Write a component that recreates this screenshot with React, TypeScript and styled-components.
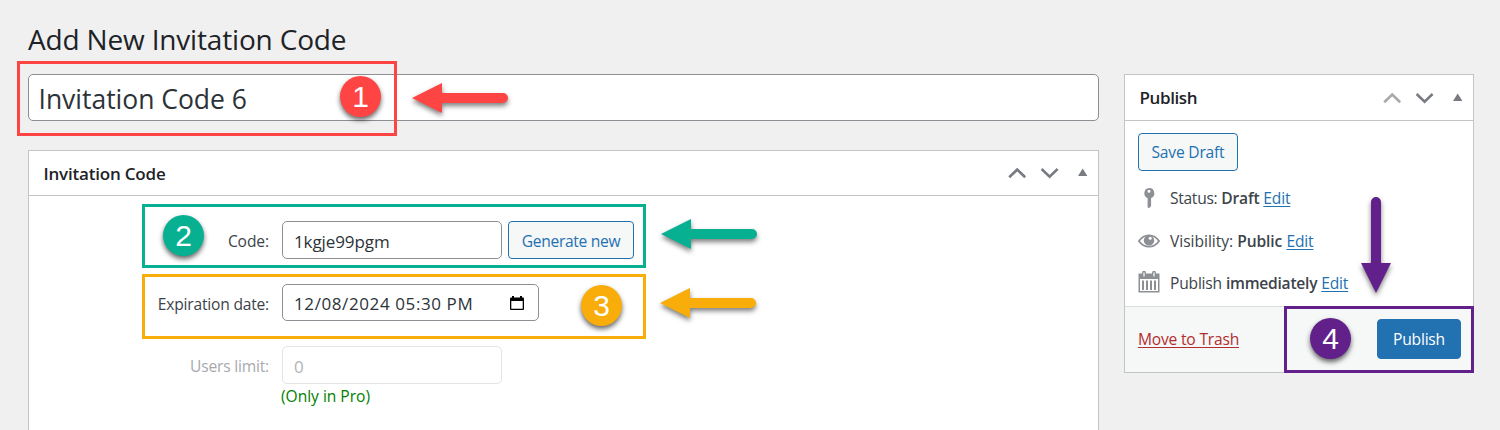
import React from "react";
import styled, { createGlobalStyle } from "styled-components";

const GlobalStyle = createGlobalStyle`
  *, *::before, *::after { box-sizing: border-box; }
  body {
    margin: 0;
    background: #f0f0f0;
    color: #3c434a;
    font-family: "Open Sans", "Noto Sans", sans-serif;
    overflow: hidden;
  }
`;

const colors = {
  red: "#ff4444",
  green: "#08b092",
  amber: "#f9ad0b",
  purple: "#62208a",
  link: "#2271b1",
};

const Page = styled.div`
  position: relative;
  width: 1500px;
  height: 430px;
  overflow: hidden;
  padding: 19px 26px 0 28px;
`;

const Heading = styled.h1`
  margin: 0;
  height: 55px;
  font-size: 28px;
  font-weight: 400;
  line-height: 40px;
  letter-spacing: -0.17px;
  color: #1d2327;
  white-space: nowrap;
`;

const Columns = styled.div`
  display: grid;
  grid-template-columns: 1071px 350px;
  column-gap: 25px;
  align-items: start;
`;

const MainColumn = styled.div`
  display: flex;
  flex-direction: column;
  gap: 29px;
`;

const TitleField = styled.div`
  height: 47px;
  padding: 0 9.5px;
  border: 1px solid #8c8f94;
  border-radius: 5px;
  background: #fff;
  font-size: 26.5px;
  line-height: 48px;
  letter-spacing: -0.02px;
  color: #2c3338;
  white-space: nowrap;
`;

const Panel = styled.section<{ $height: number }>`
  height: ${(p) => p.$height}px;
  border: 1px solid #c3c4c7;
  background: #fff;
  display: flex;
  flex-direction: column;
`;

const PanelHeader = styled.header<{ $height: number }>`
  display: flex;
  align-items: center;
  justify-content: space-between;
  flex: none;
  height: ${(p) => p.$height}px;
  padding: 0 8px 0 14.5px;
  border-bottom: 1px solid #c3c4c7;
`;

const PanelTitle = styled.h2<{ $spacing: number; $drop?: number }>`
  margin: 0;
  padding-top: ${(p) => p.$drop ?? 0}px;
  font-size: 17px;
  font-weight: 600;
  line-height: 24px;
  letter-spacing: ${(p) => p.$spacing}px;
  color: #1d2327;
`;

const HandleIcons = styled.svg`
  display: block;
  flex: none;
`;

const Form = styled.div`
  display: flex;
  flex-direction: column;
  padding-top: 25px;
`;

const FieldRow = styled.div<{ $height: number; $muted?: boolean }>`
  display: flex;
  align-items: center;
  height: ${(p) => p.$height}px;
  margin-bottom: 25px;
  color: ${(p) => (p.$muted ? "#a7aaad" : "#3c434a")};
`;

const Label = styled.label<{ $spacing: number }>`
  width: 240px;
  margin-right: 13px;
  padding-top: 2px;
  text-align: right;
  font-size: 15.6px;
  line-height: 22px;
  letter-spacing: ${(p) => p.$spacing}px;
  white-space: nowrap;
`;

const Field = styled.div<{ $width: number; $spacing?: number; $muted?: boolean }>`
  display: flex;
  align-items: center;
  justify-content: space-between;
  width: ${(p) => p.$width}px;
  height: 100%;
  padding: 2px 14px 0 11px;
  border: 1px solid ${(p) => (p.$muted ? "#e3e4e6" : "#8c8f94")};
  border-radius: 5px;
  background: #fff;
  font-size: 17px;
  letter-spacing: ${(p) => p.$spacing ?? 0}px;
  color: ${(p) => (p.$muted ? "#b2b4b7" : "#2c3338")};
  white-space: nowrap;
`;

const Button = styled.button<{ $width: number; $spacing: number; $primary?: boolean; $drop?: number }>`
  display: block;
  width: ${(p) => p.$width}px;
  height: ${(p) => (p.$primary ? 40 : 38)}px;
  padding: ${(p) => p.$drop ?? 0}px 0 0;
  border: 1px solid ${colors.link};
  border-radius: 4px;
  background: ${(p) => (p.$primary ? colors.link : "#f6f7f7")};
  color: ${(p) => (p.$primary ? "#fff" : colors.link)};
  font-family: inherit;
  font-size: 15.6px;
  letter-spacing: ${(p) => p.$spacing}px;
  white-space: nowrap;
`;

const GenerateSlot = styled.div`
  margin-left: 6px;
`;

const ProNote = styled.div`
  margin: -25px 0 0 252px;
  padding-top: 1px;
  font-size: 15.6px;
  line-height: 22px;
  letter-spacing: -0.03px;
  color: #008000;
`;

const PublishBody = styled.div`
  flex: 1;
  padding: 12px 13px 0;
`;

const StatusList = styled.div`
  display: flex;
  flex-direction: column;
  padding-top: 6px;
`;

const StatusRow = styled.div`
  display: flex;
  align-items: center;
  height: 42.4px;
  font-size: 15.6px;
  white-space: nowrap;
`;

const StatusIcon = styled.svg`
  flex: none;
  width: 24px;
  height: 24px;
  margin-right: 8px;
`;

const StatusText = styled.span<{ $spacing: number; $gap: number }>`
  letter-spacing: ${(p) => p.$spacing}px;
  margin-right: ${(p) => p.$gap}px;
`;

const StatusValue = styled.b<{ $spacing: number; $gap: number }>`
  font-weight: 600;
  letter-spacing: ${(p) => p.$spacing}px;
  margin-right: ${(p) => p.$gap}px;
`;

const Link = styled.a<{ $danger?: boolean; $spacing: number }>`
  color: ${(p) => (p.$danger ? "#b32d2e" : colors.link)};
  font-size: 15.6px;
  letter-spacing: ${(p) => p.$spacing}px;
  text-decoration: underline;
  text-decoration-thickness: 1px;
  text-underline-offset: 2px;
  text-decoration-skip-ink: none;
`;

const PublishFooter = styled.footer`
  display: flex;
  align-items: center;
  justify-content: space-between;
  flex: none;
  height: 66px;
  padding: 0 12px 1px 13px;
  border-top: 1px solid #dcdcde;
  background: #f6f7f7;
`;

const Highlight = styled.div<{ $x: number; $y: number; $w: number; $h: number; $color: string }>`
  position: absolute;
  left: ${(p) => p.$x}px;
  top: ${(p) => p.$y}px;
  width: ${(p) => p.$w}px;
  height: ${(p) => p.$h}px;
  border: 3px solid ${(p) => p.$color};
`;

const Step = styled.div<{ $x: number; $y: number; $color: string }>`
  position: absolute;
  left: ${(p) => p.$x}px;
  top: ${(p) => p.$y}px;
  width: 41px;
  height: 41px;
  border-radius: 50%;
  background: ${(p) => p.$color};
  box-shadow: 0 3px 5px rgba(0, 0, 0, 0.6);
  color: #fff;
  font-family: "Liberation Sans", Arial, sans-serif;
  font-size: 30px;
  line-height: 42px;
  text-align: center;
`;

const ArrowSvg = styled.svg<{ $x: number; $y: number }>`
  position: absolute;
  left: ${(p) => p.$x}px;
  top: ${(p) => p.$y}px;
  overflow: visible;
  filter: drop-shadow(0 3px 2.5px rgba(0, 0, 0, 0.5));
`;

function LeftArrow({ x, y, color }: { x: number; y: number; color: string }) {
  return (
    <ArrowSvg $x={x} $y={y} width="96" height="30" fill={color}>
      <path d="M0 15 30 0V10H91a5 5 0 0 1 0 10H30V30Z" />
    </ArrowSvg>
  );
}

function DownArrow({ x, y, color }: { x: number; y: number; color: string }) {
  return (
    <ArrowSvg $x={x} $y={y} width="30" height="96" fill={color}>
      <path d="M15 96 0 66H10V5a5 5 0 0 1 10 0V66H30Z" />
    </ArrowSvg>
  );
}

function PanelHandles({ first }: { first?: boolean }) {
  return (
    <HandleIcons width="84" height="24" viewBox="0 0 84 24" fill="none">
      <path d="M3.200 16.200 11.200 8.600 19.200 16.200" stroke={first ? "#a7aaad" : "#787c82"} strokeWidth="2.600" />
      <path d="M35.600 8 43.600 15.600 51.600 8" stroke="#787c82" strokeWidth="2.600" />
      <path d="M72 15 76.700 7.500 81.400 15Z" fill="#787c82" />
    </HandleIcons>
  );
}

function CalendarGlyph() {
  return (
    <svg width="14" height="15" viewBox="0 0 14 15">
      <path
        fill="#000"
        fillRule="evenodd"
        d="M2 0h2v1.500h6V0h2v1.500h1a1 1 0 0 1 1 1V13a1 1 0 0 1-1 1H1a1 1 0 0 1-1-1V2.500a1 1 0 0 1 1-1h1ZM1.300 5v7.700h11.400V5Z"
      />
    </svg>
  );
}

export default function App() {
  return (
    <Page>
      <GlobalStyle />
      <Heading>Add New Invitation Code</Heading>
      <Columns>
        <MainColumn>
          <TitleField>Invitation Code 6</TitleField>
          <Panel $height={320}>
            <PanelHeader $height={45}>
              <PanelTitle $spacing={-0.2} $drop={2}>Invitation Code</PanelTitle>
              <PanelHandles />
            </PanelHeader>
            <Form>
              <FieldRow $height={38}>
                <Label $spacing={-0.1}>Code:</Label>
                <Field $width={220} $spacing={-0.1}>1kgje99pgm</Field>
                <GenerateSlot>
                  <Button $width={126} $spacing={-0.3} $drop={2}>Generate new</Button>
                </GenerateSlot>
              </FieldRow>
              <FieldRow $height={37}>
                <Label $spacing={-0.2}>Expiration date:</Label>
                <Field $width={257} $spacing={0.6}>
                  <span>12/08/2024 05:30 PM</span>
                  <CalendarGlyph />
                </Field>
              </FieldRow>
              <FieldRow $height={38} $muted>
                <Label $spacing={-0.2}>Users limit:</Label>
                <Field $width={220} $muted>0</Field>
              </FieldRow>
              <ProNote>(Only in Pro)</ProNote>
            </Form>
          </Panel>
        </MainColumn>
        <Panel $height={299} as="aside">
          <PanelHeader $height={46}>
            <PanelTitle $spacing={-0.4}>Publish</PanelTitle>
            <PanelHandles first />
          </PanelHeader>
          <PublishBody>
            <Button $width={100} $spacing={-0.2}>Save Draft</Button>
            <StatusList>
              <StatusRow>
                <StatusIcon viewBox="0 0 24 24" fill="#8c8f94">
                  <path fillRule="evenodd" d="M11 2a5.200 5.200 0 0 1 2.100 10V20l-2 2.300-1.500-1V12A5.200 5.200 0 0 1 11 2Zm0 1.700a1.500 1.500 0 1 0 0 3 1.500 1.500 0 0 0 0-3Z" />
                </StatusIcon>
                <StatusText $spacing={-0.3} $gap={4}>Status:</StatusText>
                <StatusValue $spacing={-0.2} $gap={4}>Draft</StatusValue>
                <Link $spacing={-0.2}>Edit</Link>
              </StatusRow>
              <StatusRow>
                <StatusIcon viewBox="0 0 24 24">
                  <path d="M.9 12C6 4.400 16 4.400 21.100 12 16 19.600 6 19.600 .9 12Z" fill="none" stroke="#8c8f94" strokeWidth="1.700" />
                  <circle cx="11" cy="11.400" r="5.200" fill="#8c8f94" />
                  <circle cx="12.200" cy="9.300" r="1.500" fill="#fff" />
                </StatusIcon>
                <StatusText $spacing={-0.02} $gap={4}>Visibility:</StatusText>
                <StatusValue $spacing={-0.1} $gap={4.2}>Public</StatusValue>
                <Link $spacing={-0.2}>Edit</Link>
              </StatusRow>
              <StatusRow>
                <StatusIcon viewBox="0 0 24 24" fill="#8c8f94">
                  <path
                    fillRule="evenodd"
                    d="M.5 2.500H4V1.800a2 2 0 0 1 4 0V2.500h6V1.800a2 2 0 0 1 4 0V2.500h3.500V21.500H.5ZM5.400 1.800V5a.6.6 0 0 0 1.200 0V1.800a.6.6 0 0 0-1.200 0ZM15.400 1.800V5a.6.6 0 0 0 1.200 0V1.800a.6.6 0 0 0-1.200 0ZM2 8V20h18V8Z"
                  />
                  <path d="M4 9.500h2V19H4ZM8 9.500h2V19H8ZM12 9.500h2V19h-2ZM16 9.500h2V19h-2Z" />
                </StatusIcon>
                <StatusText $spacing={-0.2} $gap={4}>Publish</StatusText>
                <StatusValue $spacing={-0.25} $gap={4}>immediately</StatusValue>
                <Link $spacing={-0.2}>Edit</Link>
              </StatusRow>
            </StatusList>
          </PublishBody>
          <PublishFooter>
            <Link $danger $spacing={-0.2}>Move to Trash</Link>
            <Button $primary $width={84} $spacing={-0.2}>Publish</Button>
          </PublishFooter>
        </Panel>
      </Columns>

      <Highlight $x={17} $y={61} $w={380} $h={75} $color={colors.red} />
      <Highlight $x={142} $y={204} $w={504} $h={64} $color={colors.green} />
      <Highlight $x={142} $y={274} $w={504} $h={65} $color={colors.amber} />
      <Highlight $x={1284} $y={306} $w={190} $h={67} $color={colors.purple} />
      <Step $x={340} $y={76} $color={colors.red}>1</Step>
      <Step $x={163} $y={215} $color={colors.green}>2</Step>
      <Step $x={581} $y={285} $color={colors.amber}>3</Step>
      <Step $x={1310} $y={318} $color={colors.purple}>4</Step>
      <LeftArrow x={412} y={83} color={colors.red} />
      <LeftArrow x={661} y={219} color={colors.green} />
      <LeftArrow x={660} y={288} color={colors.amber} />
      <DownArrow x={1361} y={197} color={colors.purple} />
    </Page>
  );
}
